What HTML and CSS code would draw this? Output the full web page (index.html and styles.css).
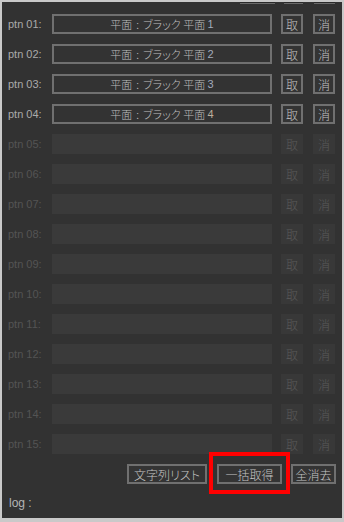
FILE: index.html
```html
<!DOCTYPE html>
<html lang="ja">
<head>
<meta charset="utf-8">
<link rel="stylesheet" href="styles.css">
</head>
<body>
<div class="frame">
  <div class="panel">
    <div class="strip">
      <span class="stub stub-wide"></span>
      <span class="stub stub-a"></span>
      <span class="stub stub-b"></span>
    </div>

    <div class="row">
      <span class="label">ptn 01:</span>
      <div class="field">平面<span class="sep">:</span>ブラック 平面 <span class="num">1</span></div>
      <span class="btn btn-get">取</span>
      <span class="btn btn-del">消</span>
    </div>
    <div class="row">
      <span class="label">ptn 02:</span>
      <div class="field">平面<span class="sep">:</span>ブラック 平面 <span class="num">2</span></div>
      <span class="btn btn-get">取</span>
      <span class="btn btn-del">消</span>
    </div>
    <div class="row">
      <span class="label">ptn 03:</span>
      <div class="field">平面<span class="sep">:</span>ブラック 平面 <span class="num">3</span></div>
      <span class="btn btn-get">取</span>
      <span class="btn btn-del">消</span>
    </div>
    <div class="row">
      <span class="label">ptn 04:</span>
      <div class="field">平面<span class="sep">:</span>ブラック 平面 <span class="num num-warm">4</span></div>
      <span class="btn btn-get">取</span>
      <span class="btn btn-del">消</span>
    </div>

    <div class="row off"><span class="label">ptn 05:</span><div class="field"></div><span class="btn btn-get">取</span><span class="btn btn-del">消</span></div>
    <div class="row off"><span class="label">ptn 06:</span><div class="field"></div><span class="btn btn-get">取</span><span class="btn btn-del">消</span></div>
    <div class="row off"><span class="label">ptn 07:</span><div class="field"></div><span class="btn btn-get">取</span><span class="btn btn-del">消</span></div>
    <div class="row off"><span class="label">ptn 08:</span><div class="field"></div><span class="btn btn-get">取</span><span class="btn btn-del">消</span></div>
    <div class="row off"><span class="label">ptn 09:</span><div class="field"></div><span class="btn btn-get">取</span><span class="btn btn-del">消</span></div>
    <div class="row off"><span class="label">ptn 10:</span><div class="field"></div><span class="btn btn-get">取</span><span class="btn btn-del">消</span></div>
    <div class="row off"><span class="label">ptn 11:</span><div class="field"></div><span class="btn btn-get">取</span><span class="btn btn-del">消</span></div>
    <div class="row off"><span class="label">ptn 12:</span><div class="field"></div><span class="btn btn-get">取</span><span class="btn btn-del">消</span></div>
    <div class="row off"><span class="label">ptn 13:</span><div class="field"></div><span class="btn btn-get">取</span><span class="btn btn-del">消</span></div>
    <div class="row off"><span class="label">ptn 14:</span><div class="field"></div><span class="btn btn-get">取</span><span class="btn btn-del">消</span></div>
    <div class="row off"><span class="label">ptn 15:</span><div class="field"></div><span class="btn btn-get">取</span><span class="btn btn-del">消</span></div>

    <div class="actions">
      <span class="abtn abtn-list">文字列リスト</span>
      <span class="abtn abtn-all highlight">一括取得</span>
      <span class="abtn abtn-clear">全消去</span>
    </div>

    <div class="log">log :</div>
  </div>
</div>
</body>
</html>
```

FILE: styles.css
```css
* {
  box-sizing: border-box;
}

html, body {
  margin: 0;
  padding: 0;
}

body {
  width: 344px;
  height: 522px;
  background: #c9c9c9;
  overflow: hidden;
}

.frame {
  width: 344px;
  height: 522px;
  padding: 2px 2px 4px 2px;
  background: #c9c9c9;
}

.panel {
  height: 516px;
  background: #323232;
  padding: 0 7px 0 6px;
  display: flex;
  flex-direction: column;
  overflow: hidden;
  font-family: "Liberation Sans", "Noto Sans CJK JP", sans-serif;
}

.strip {
  height: 2px;
  display: flex;
  align-items: flex-end;
}

.stub {
  height: 2px;
  background: #2a2a2a;
  border-bottom: 1px solid #6a6a6a;
}

.stub-wide {
  margin-left: 232px;
  width: 35px;
}

.stub-a {
  margin-left: 9px;
  width: 20px;
}

.stub-b {
  margin-left: 11px;
  width: 21px;
}

.row {
  display: flex;
  align-items: center;
  height: 20px;
  margin-top: 10px;
}

.label {
  width: 44px;
  font-size: 11px;
  color: #aaaaaa;
  white-space: nowrap;
}

.field {
  width: 220px;
  height: 20px;
  border: 2px solid #707070;
  background: #333333;
  display: flex;
  align-items: center;
  justify-content: center;
  font-family: "Noto Sans CJK JP", sans-serif;
  font-feature-settings: "palt";
  font-size: 11px;
  font-weight: 300;
  color: #bebebe;
  white-space: pre;
}

.sep {
  margin: 0 4px;
}

.num {
  font-family: "Liberation Sans", sans-serif;
  color: #a2abbd;
}

.num-warm {
  color: #bdae9c;
}

.btn {
  width: 22px;
  height: 20px;
  border: 2px solid #707070;
  background: #343434;
  display: flex;
  align-items: center;
  justify-content: center;
  font-family: "Noto Sans CJK JP", sans-serif;
  font-size: 12px;
  font-weight: 300;
  color: #c4c4c4;
}

.btn-get {
  margin-left: 9px;
}

.btn-del {
  margin-left: 10px;
}

.row.off .label {
  color: #545454;
}

.row.off .field {
  border: none;
  background: #3a3a3a;
}

.row.off .btn {
  border: none;
  background: #383838;
  color: #5a5a5a;
}

.actions {
  display: flex;
  justify-content: flex-end;
  align-items: center;
  height: 20px;
  margin-top: 10px;
  margin-right: -1px;
}

.abtn {
  height: 20px;
  border: 2px solid #707070;
  background: #343434;
  display: flex;
  align-items: center;
  justify-content: center;
  font-family: "Noto Sans CJK JP", sans-serif;
  font-feature-settings: "palt";
  font-size: 12px;
  font-weight: 300;
  color: #c4c4c4;
  white-space: nowrap;
}

.abtn-list {
  width: 80px;
}

.abtn-all {
  width: 65px;
  margin-left: 10px;
}

.abtn-clear {
  width: 45px;
  margin-left: 9px;
}

.highlight {
  position: relative;
}

.highlight::after {
  content: "";
  position: absolute;
  top: -14px;
  left: -10px;
  right: -10px;
  bottom: -12px;
  border: 4px solid #ff0000;
}

.log {
  margin-top: 9px;
  height: 20px;
  display: flex;
  align-items: center;
  font-size: 12px;
  color: #b4b4b4;
  padding-left: 1px;
}
```
